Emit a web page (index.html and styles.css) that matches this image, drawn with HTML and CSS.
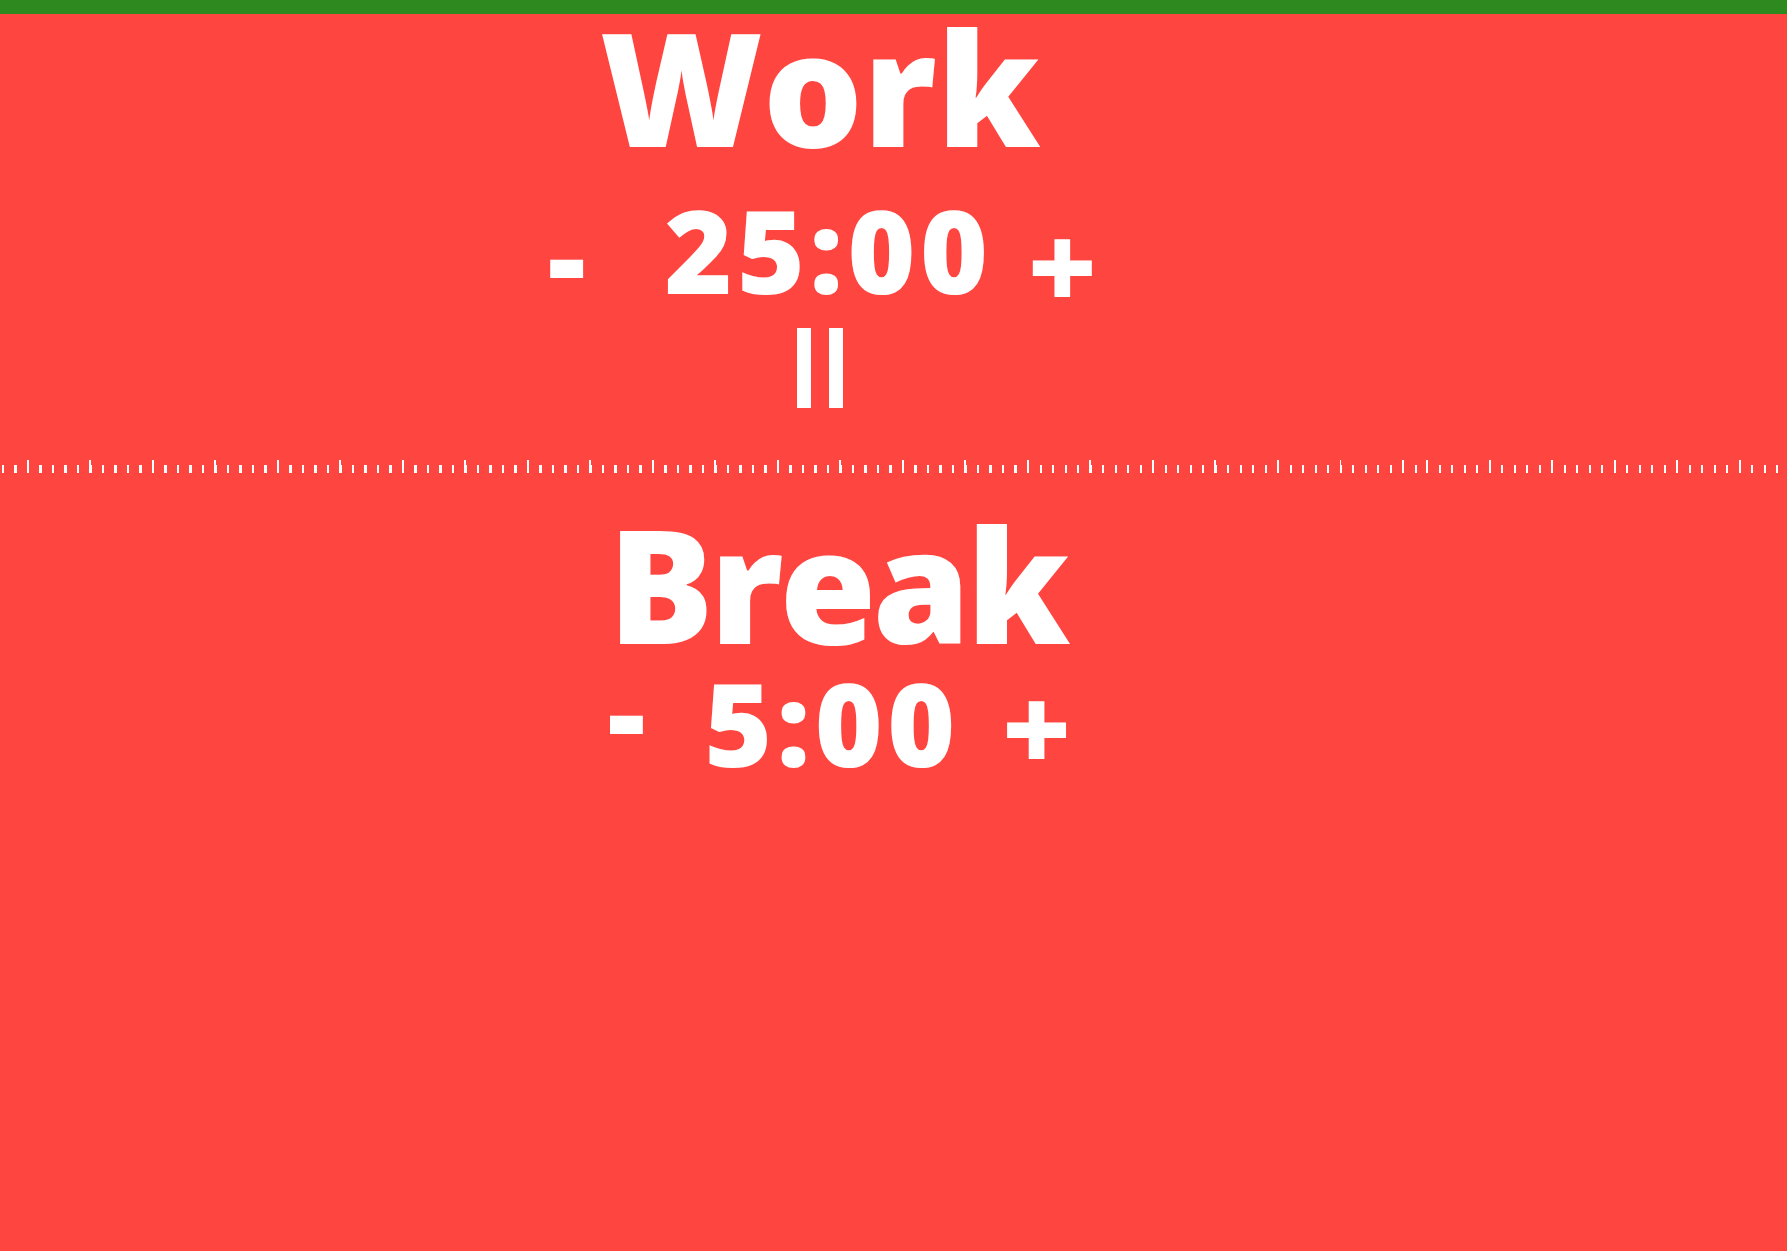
FILE: index.html
```html
<!DOCTYPE html>
<html lang="en">
<head>
  <meta charset="UTF-8">
  <meta name="viewport" content="width=device-width, initial-scale=1.0">
  <title>Pomodoro</title>
  <link rel="stylesheet" href="styles.css">
</head>
<body>
  <div id="progress"></div>
  <div class="section work">
    <h1 class="title">Work</h1>
    <div class="timer-row">
      <button class="adjust minus">-</button>
      <span class="time">25:00</span>
      <button class="adjust plus">+</button>
    </div>
    <button class="pause" aria-label="Pause"><span></span><span></span></button>
  </div>
  <div class="ruler">
    <div class="ruler-seg first"></div>
    <div class="ruler-seg second"></div>
  </div>
  <div class="section break">
    <h1 class="title">Break</h1>
    <div class="timer-row">
      <button class="adjust minus">-</button>
      <span class="time">5:00</span>
      <button class="adjust plus">+</button>
    </div>
  </div>
</body>
</html>
```

FILE: styles.css
```css
html, body {
  height: 100%;
}
body {
  margin: 0;
  background-color: #ff4540;
  color: #fff;
  font-family: "Open Sans", "Noto Sans", sans-serif;
  font-weight: 800;
  overflow: hidden;
}
#progress {
  height: 14px;
  background-color: #2e8a1e;
}
.section {
  display: flex;
  flex-direction: column;
  align-items: center;
}
.section.work {
  margin-right: 147px;
}
.section.break {
  margin-right: 113px;
  margin-top: 40px;
}
.title {
  margin: 0;
  font-size: 157px;
  font-weight: 800;
  line-height: 0.9;
}
.work .title {
  margin-top: 2px;
}
.break .title {
  letter-spacing: -4px;
}
.timer-row {
  display: flex;
  align-items: center;
  margin-left: 5px;
  line-height: 1;
}
.work .timer-row {
  margin-top: 34px;
}
.break .timer-row {
  margin-top: 9px;
}
.time {
  font-size: 116px;
  letter-spacing: 4.5px;
}
.adjust {
  background: none;
  border: none;
  padding: 0;
  color: #fff;
  font-family: inherit;
  font-weight: 800;
  font-size: 119px;
  line-height: 0.8;
  cursor: pointer;
}
/* shift the glyphs without changing the row height */
.work .minus { margin-right: 79px; margin-top: 6px; margin-bottom: -6px; }
.work .plus { margin-left: 35px; margin-top: 15px; margin-bottom: -15px; }
.break .minus { margin-right: 59px; margin-top: -10px; margin-bottom: 10px; }
.break .plus { margin-left: 42px; margin-top: 5px; margin-bottom: -5px; }
.pause {
  display: flex;
  gap: 18px;
  margin-top: 21px;
  padding: 0;
  background: none;
  border: none;
  cursor: pointer;
}
.pause span {
  width: 14px;
  height: 80px;
  background-color: #fff;
}
.ruler {
  display: flex;
  height: 13px;
  margin-top: 52px;
}
.ruler-seg {
  height: 13px;
  background-image:
    repeating-linear-gradient(to right, #fff 0 2px, transparent 2px 62.5px),
    repeating-linear-gradient(to right, #fff 0 2px, transparent 2px 12.5px);
  background-size: 100% 13px, 100% 8px;
  background-repeat: no-repeat;
  background-position: 0 0, 0 100%;
}
.ruler-seg.first {
  width: 1424px;
  margin-left: 2px;
  background-image:
    repeating-linear-gradient(to right, transparent 0 25px, #fff 25px 27px, transparent 27px 62.5px),
    repeating-linear-gradient(to right, #fff 0 2px, transparent 2px 12.5px);
}
.ruler-seg.second {
  flex: 1;
}
```
